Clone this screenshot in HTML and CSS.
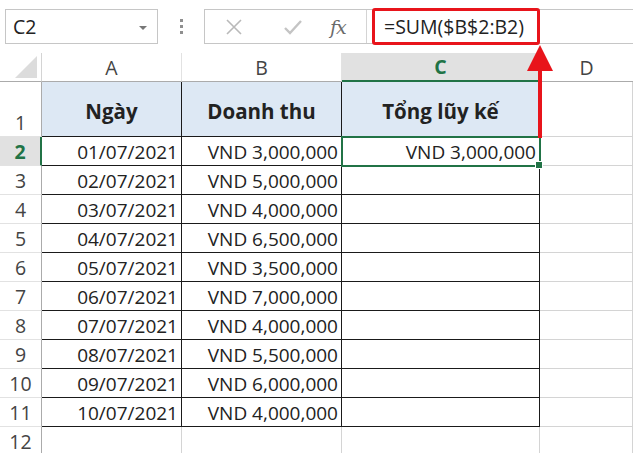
FILE: index.html
```html
<!DOCTYPE html>
<html>
<head>
<meta charset="utf-8">
<link rel="stylesheet" href="styles.css">
</head>
<body>
<div class="app">
  <div class="topbar">
    <div class="namebox"><span>C2</span><span class="caret"></span></div>
    <div class="dots"><i></i><i></i><i></i></div>
    <div class="fbar">
      <div class="fbtns">
        <svg class="ico" width="18" height="18" viewBox="0 0 18 18"><path d="M2 2L16 16M16 2L2 16" stroke="#b9b9b9" stroke-width="1.6" fill="none"/></svg>
        <svg class="ico" width="20" height="18" viewBox="0 0 20 18"><path d="M2 10L7 15L18 3" stroke="#c4c4c4" stroke-width="2.4" fill="none"/></svg>
        <span class="fx">fx</span>
      </div>
      <div class="finput"><span class="hl">=SUM($B$2:B2)</span></div>
    </div>
  </div>
  <div class="sheet">
    <div class="corner"><span class="tri"></span></div>
    <div class="ch">A</div>
    <div class="ch">B</div>
    <div class="ch sel">C</div>
    <div class="ch last">D</div>

    <div class="rh tall">1</div>
    <div class="c t head tall">Ngày</div>
    <div class="c t head tall">Doanh thu</div>
    <div class="c t head tall">Tổng lũy kế</div>
    <div class="c g tall"></div>

    <div class="rh rsel">2</div>
    <div class="c t num">01/07/2021</div>
    <div class="c t num">VND 3,000,000</div>
    <div class="c t num active">VND 3,000,000<span class="handle"></span></div>
    <div class="c g"></div>

    <div class="rh">3</div><div class="c t num">02/07/2021</div><div class="c t num">VND 5,000,000</div><div class="c t"></div><div class="c g"></div>
    <div class="rh">4</div><div class="c t num">03/07/2021</div><div class="c t num">VND 4,000,000</div><div class="c t"></div><div class="c g"></div>
    <div class="rh">5</div><div class="c t num">04/07/2021</div><div class="c t num">VND 6,500,000</div><div class="c t"></div><div class="c g"></div>
    <div class="rh">6</div><div class="c t num">05/07/2021</div><div class="c t num">VND 3,500,000</div><div class="c t"></div><div class="c g"></div>
    <div class="rh">7</div><div class="c t num">06/07/2021</div><div class="c t num">VND 7,000,000</div><div class="c t"></div><div class="c g"></div>
    <div class="rh">8</div><div class="c t num">07/07/2021</div><div class="c t num">VND 4,000,000</div><div class="c t"></div><div class="c g"></div>
    <div class="rh">9</div><div class="c t num">08/07/2021</div><div class="c t num">VND 5,500,000</div><div class="c t"></div><div class="c g"></div>
    <div class="rh">10</div><div class="c t num">09/07/2021</div><div class="c t num">VND 6,000,000</div><div class="c t"></div><div class="c g"></div>
    <div class="rh">11</div><div class="c t num">10/07/2021</div><div class="c t num">VND 4,000,000</div><div class="c t"></div><div class="c g"></div>
    <div class="rh">12</div><div class="c g"></div><div class="c g"></div><div class="c g"></div><div class="c g"></div>
  </div>
  <svg class="arrow" width="40" height="100" viewBox="0 0 40 100">
    <path d="M14 0L27 26L1 26Z" fill="#e8141b"/>
    <rect x="12" y="24" width="4" height="69" fill="#e8141b"/>
  </svg>
</div>
</body>
</html>
```
FILE: styles.css
```css
html, body { margin: 0; padding: 0; background: #fff; }
body { font-family: "Open Sans", "Lato", sans-serif; color: #222; overflow: hidden; }
.app { position: relative; width: 633px; height: 453px; overflow: hidden; }

.topbar { display: flex; align-items: flex-start; height: 53px; padding-top: 9px; box-sizing: border-box; }
.namebox { margin-left: 5px; width: 153px; height: 35px; box-sizing: border-box; border: 1px solid #c6c6c6; display: flex; align-items: center; justify-content: space-between; padding: 0 10px 0 7px; font-size: 19.5px; color: #222; }
.caret { width: 0; height: 0; border-left: 4px solid transparent; border-right: 4px solid transparent; border-top: 4px solid #777; margin-top: 2px; }
.dots { width: 46px; height: 35px; display: flex; flex-direction: column; align-items: center; justify-content: center; gap: 3px; }
.dots i { display: block; width: 3px; height: 3px; background: #8f8f8f; }
.fbar { flex: 1; height: 35px; box-sizing: border-box; border-top: 1px solid #c6c6c6; border-bottom: 1px solid #c6c6c6; display: flex; }
.fbtns { width: 163px; box-sizing: border-box; border-left: 1px solid #c6c6c6; border-right: 1px solid #d4d4d4; display: flex; align-items: center; padding-left: 20px; gap: 0; }
.fbtns .ico:first-child { margin-right: 40px; }
.fbtns .ico:nth-child(2) { margin-right: 27px; }
.fx { font-family: "DejaVu Serif", "Liberation Serif", serif; font-style: italic; font-size: 19px; color: #6a6a6a; letter-spacing: -1px; }
.finput { flex: 1; display: flex; padding-left: 5px; }
.hl { display: flex; align-items: center; width: 168px; height: 37px; margin-top: -2px; box-sizing: border-box; border: 3px solid #e8141b; border-radius: 3px; padding-left: 9px; font-size: 19.5px; color: #222; }

.sheet { display: grid; grid-template-columns: 42px 140px 160px 198px 93px; grid-template-rows: 29px 55px repeat(11, 29px); font-size: 19px; }
.corner { border-right: 1px solid #d4d4d4; border-bottom: 1px solid #ababab; box-sizing: border-box; position: relative; }
.tri { position: absolute; right: 4px; bottom: 3px; width: 0; height: 0; border-left: 22px solid transparent; border-bottom: 22px solid #dcdcdc; }
.ch { display: flex; align-items: center; justify-content: center; color: #444; border-bottom: 1px solid #ababab; border-right: 1px solid #e2e2e2; box-sizing: border-box; font-size: 19.5px; }
.ch.sel { background: #e1e1e1; color: #217346; font-weight: 700; border-bottom: 2px solid #217346; }
.ch.last { border-right: none; }
.rh { display: flex; align-items: flex-end; justify-content: center; color: #444; border-right: 1px solid #ababab; border-bottom: 1px solid #e2e2e2; box-sizing: border-box; line-height: 1; padding-bottom: 4px; font-size: 19.5px; }
.rh.rsel { background: #e1e1e1; color: #217346; font-weight: 700; border-right: 2px solid #217346; }
.c { box-sizing: border-box; display: flex; align-items: center; line-height: 1; }
.c.g { border-right: 1px solid #d4d4d4; border-bottom: 1px solid #d4d4d4; }
.c.t { border-right: 1px solid #1a1a1a; border-bottom: 1px solid #1a1a1a; }
.c.head { background: #dde8f4; justify-content: center; font-weight: 700; padding-top: 4px; font-size: 20.5px; }
.c.num { justify-content: flex-end; padding-right: 3px; padding-top: 2px; }
.c.active { position: relative; outline: 2px solid #217346; outline-offset: -1px; border-color: #217346; }
.handle { position: absolute; right: -4px; bottom: -4px; width: 6px; height: 6px; background: #217346; border: 1px solid #fff; }
.arrow { position: absolute; left: 526px; top: 45px; }
```
